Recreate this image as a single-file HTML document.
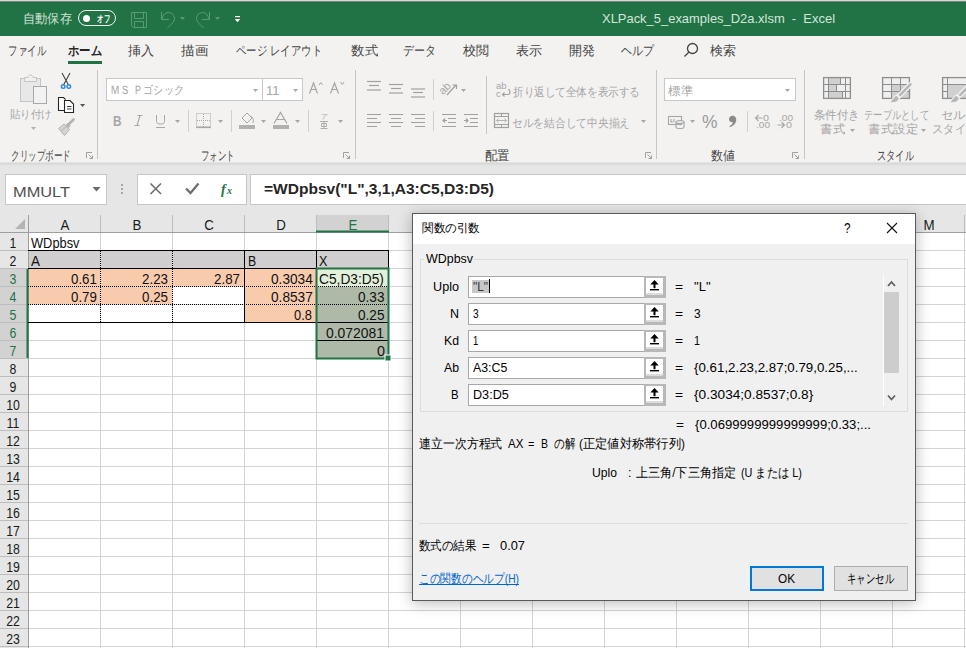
<!DOCTYPE html>
<html><head><meta charset="utf-8">
<style>
*{margin:0;padding:0;box-sizing:border-box}
html,body{width:966px;height:648px;overflow:hidden;background:#fff;font-family:"Liberation Sans",sans-serif;position:relative}
.a{position:absolute;white-space:nowrap}
svg{position:absolute;overflow:visible}

</style></head><body>
<div class="a" style="left:0px;top:0px;width:966px;height:1px;background:#d6d6d6"></div>
<div class="a" style="left:0px;top:1px;width:966px;height:1px;background:#7d8a80"></div>
<div class="a" style="left:0px;top:2px;width:966px;height:34px;background:#217346"></div>
<div class="a" style="left:0px;top:2px;width:966px;height:1px;background:#1b6e40"></div>
<div class="a" style="left:0px;top:36px;width:966px;height:127px;background:#f3f2f1"></div>
<div class="a" style="left:0px;top:163px;width:966px;height:52px;background:#e6e6e6"></div>
<div class="a" style="left:0px;top:162px;width:966px;height:4px;background:linear-gradient(#e9e8e7,#d8d8d8 40%,#e6e6e6)"></div>
<div class="a" style="left:23px;top:12.92px;font-size:12.5px;line-height:12.5px;color:#cfe2d5;font-weight:normal;transform:scaleX(0.9423);transform-origin:0 0;">自動保存</div>
<div class="a" style="left:78px;top:10px;width:38px;height:16px;border:1.5px solid #f2f7f3;border-radius:8px"></div>
<div class="a" style="left:82.5px;top:14.5px;width:7px;height:7px;border-radius:50%;background:#fff"></div>
<div class="a" style="left:97px;top:14.04px;font-size:10px;line-height:10px;color:#fff;font-weight:bold;transform:scaleX(0.6500);transform-origin:0 0;">オフ</div>
<svg style="left:0;top:0" width="966" height="36"><g fill="none" stroke="#5c9a76" stroke-width="1">
<path d="M131.5 12.5 H146.5 V27.5 H133.5 L131.5 25.5 Z"/>
<path d="M134.5 12.5 V18.5 H143.5 V12.5"/>
<path d="M134.5 27.5 V21.5 H143.5 V27.5"/>
<path d="M161.5 12 V19.5 H169"/>
<path d="M162.5 18.5 A6 6 0 0 1 174.5 18.5 A6 6 0 0 1 172.74 22.74 L167.5 28"/>
<path d="M209.5 12 V19.5 H202"/>
<path d="M208.5 18.5 A6 6 0 0 0 196.5 18.5 A6 6 0 0 0 198.26 22.74 L203.5 28"/>
</g>
<g fill="#5c9a76"><path d="M180 17 H185 L182.5 20 Z"/><path d="M215 17 H220 L217.5 20 Z"/></g>
<g fill="#fff"><rect x="235" y="16" width="5" height="1.2"/><path d="M234.8 19 H240.2 L237.5 22.2 Z"/></g>
</svg>
<div class="a" style="left:602px;top:11.80px;font-size:13px;line-height:13px;color:#d3e6d9;font-weight:normal;transform:scaleX(0.9953);transform-origin:0 0;">XLPack_5_examples_D2a.xlsm&nbsp; - &nbsp;Excel</div>
<div class="a" style="left:8px;top:45.42px;font-size:12.5px;line-height:12.5px;color:#444444;font-weight:normal;transform:scaleX(0.7308);transform-origin:0 0;">ファイル</div>
<div class="a" style="left:128px;top:45.42px;font-size:12.5px;line-height:12.5px;color:#444444;font-weight:normal;transform:scaleX(1.0000);transform-origin:0 0;">挿入</div>
<div class="a" style="left:181px;top:45.42px;font-size:12.5px;line-height:12.5px;color:#444444;font-weight:normal;transform:scaleX(1.0385);transform-origin:0 0;">描画</div>
<div class="a" style="left:236px;top:45.42px;font-size:12.5px;line-height:12.5px;color:#444444;font-weight:normal;transform:scaleX(0.8001);transform-origin:0 0;">ページ レイアウト</div>
<div class="a" style="left:351px;top:45.42px;font-size:12.5px;line-height:12.5px;color:#444444;font-weight:normal;transform:scaleX(1.0385);transform-origin:0 0;">数式</div>
<div class="a" style="left:403px;top:45.42px;font-size:12.5px;line-height:12.5px;color:#444444;font-weight:normal;transform:scaleX(0.8462);transform-origin:0 0;">データ</div>
<div class="a" style="left:463px;top:45.42px;font-size:12.5px;line-height:12.5px;color:#444444;font-weight:normal;transform:scaleX(1.0000);transform-origin:0 0;">校閲</div>
<div class="a" style="left:516px;top:45.42px;font-size:12.5px;line-height:12.5px;color:#444444;font-weight:normal;transform:scaleX(1.0000);transform-origin:0 0;">表示</div>
<div class="a" style="left:569px;top:45.42px;font-size:12.5px;line-height:12.5px;color:#444444;font-weight:normal;transform:scaleX(1.0000);transform-origin:0 0;">開発</div>
<div class="a" style="left:621px;top:45.42px;font-size:12.5px;line-height:12.5px;color:#444444;font-weight:normal;transform:scaleX(0.8462);transform-origin:0 0;">ヘルプ</div>
<div class="a" style="left:710px;top:45.42px;font-size:12.5px;line-height:12.5px;color:#444444;font-weight:normal;transform:scaleX(1.0000);transform-origin:0 0;">検索</div>
<div class="a" style="left:68px;top:45.42px;font-size:12.5px;line-height:12.5px;color:#262626;font-weight:bold;transform:scaleX(0.8718);transform-origin:0 0;">ホーム</div>
<div class="a" style="left:68px;top:61px;width:34px;height:3px;background:#217346"></div>
<svg style="left:0;top:0" width="966" height="70"><g fill="none" stroke="#444" stroke-width="1.3">
<circle cx="692.5" cy="48.5" r="5"/><path d="M689 52 L684.5 56.5"/></g></svg>
<div class="a" style="left:97px;top:70px;width:1px;height:89px;background:#c8c6c4"></div>
<div class="a" style="left:355px;top:70px;width:1px;height:89px;background:#c8c6c4"></div>
<div class="a" style="left:656px;top:70px;width:1px;height:89px;background:#c8c6c4"></div>
<div class="a" style="left:804px;top:70px;width:1px;height:89px;background:#c8c6c4"></div>
<div class="a" style="left:11px;top:148.50px;font-size:13px;line-height:13px;color:#444;font-weight:normal;transform:scaleX(0.6593);transform-origin:0 0;">クリップボード</div>
<div class="a" style="left:201px;top:148.50px;font-size:13px;line-height:13px;color:#444;font-weight:normal;transform:scaleX(0.6538);transform-origin:0 0;">フォント</div>
<div class="a" style="left:485px;top:148.50px;font-size:13px;line-height:13px;color:#444;font-weight:normal;transform:scaleX(0.9615);transform-origin:0 0;">配置</div>
<div class="a" style="left:711px;top:148.50px;font-size:13px;line-height:13px;color:#444;font-weight:normal;transform:scaleX(0.9231);transform-origin:0 0;">数値</div>
<div class="a" style="left:877px;top:148.50px;font-size:13px;line-height:13px;color:#444;font-weight:normal;transform:scaleX(0.7115);transform-origin:0 0;">スタイル</div>
<svg style="left:0;top:0" width="966" height="170"><g fill="none" stroke="#a0a0a0" stroke-width="1"><path d="M86.5 158 V152.5 H92" /><path d="M88.5 154.5 L92.5 158.5 M92.5 155.5 V158.5 H89.5"/><path d="M343.5 158 V152.5 H349" /><path d="M345.5 154.5 L349.5 158.5 M349.5 155.5 V158.5 H346.5"/><path d="M645.5 158 V152.5 H651" /><path d="M647.5 154.5 L651.5 158.5 M651.5 155.5 V158.5 H648.5"/><path d="M792.5 158 V152.5 H798" /><path d="M794.5 154.5 L798.5 158.5 M798.5 155.5 V158.5 H795.5"/></g></svg>
<svg style="left:0;top:0" width="966" height="170">
<rect x="20.5" y="78.5" width="20" height="23" fill="#e8e8e8" stroke="#c4c4c4"/>
<path d="M24.5 81.5 V77.5 H28 C28.5 74 32.5 74 33 77.5 H36.5 V81.5 Z" fill="#f0f0f0" stroke="#c4c4c4"/>
<rect x="33.5" y="86.5" width="13" height="17" fill="#f2f2f2" stroke="#a8a8a8"/>
<path d="M31 127 H36 L33.5 130 Z" fill="#b0b0b0"/>
<g stroke="#444" stroke-width="1.1" fill="none"><path d="M62 73 L68.5 85 M70 73 L63.5 85"/></g>
<g stroke="#2b88d8" stroke-width="1.4" fill="none"><circle cx="63.2" cy="86.6" r="1.8"/><circle cx="68.8" cy="86.6" r="1.8"/></g>
<g stroke="#262626" stroke-width="1.1" fill="#fff">
<path d="M64 110.5 H58.5 V97.5 H63.5 L65.5 99.5"/>
<path d="M64.5 112.5 V100.5 H70 L73.5 104 V112.5 Z"/>
<path d="M67 106.5 H71.5 M67 109 H71.5" stroke-width="0.9"/></g>
<path d="M80 104 H85.2 L82.6 107 Z" fill="#555"/>
<path d="M58.5 128.5 L64 124 L69.5 129.5 L64.5 135.5 Z" fill="#d4d4d4" stroke="#b4b4b4" stroke-width="1"/>
<path d="M61 131 L66.5 126.5" stroke="#b4b4b4" stroke-width="1"/>
<path d="M65.5 125 L67.5 123 L70.5 126 L68.5 128 Z" fill="#b4b4b4"/>
<path d="M68.5 124.5 L73.5 119.5" stroke="#b4b4b4" stroke-width="2.6" stroke-linecap="round"/>
</svg>
<div class="a" style="left:10px;top:109.19px;font-size:11px;line-height:11px;color:#a6a6a6;font-weight:normal;transform:scaleX(0.9545);transform-origin:0 0;">貼り付け</div>
<div class="a" style="left:106px;top:78px;width:157px;height:23px;background:#fff;border:1px solid #c8c8c8"></div>
<div class="a" style="left:262px;top:78px;width:41px;height:23px;background:#fff;border:1px solid #c8c8c8"></div>
<div class="a" style="left:110px;top:84.34px;font-size:12px;line-height:12px;color:#a6a6a6;font-weight:normal;transform:scaleX(0.8472);transform-origin:0 0;">ＭＳ Ｐゴシック</div>
<div class="a" style="left:266px;top:83.50px;font-size:13px;line-height:13px;color:#a6a6a6;font-weight:normal;">11</div>
<svg style="left:0;top:0" width="966" height="170"><g fill="#a6a6a6">
<path d="M253 89 H258 L255.5 92 Z"/><path d="M293 89 H298 L295.5 92 Z"/>
<path d="M175 120 H180 L177.5 123 Z"/><path d="M218 120 H223 L220.5 123 Z"/>
<path d="M261 120 H266 L263.5 123 Z"/><path d="M295 120 H300 L297.5 123 Z"/>
<path d="M338 120 H343 L340.5 123 Z"/>
<path d="M461 89 H466 L463.5 92 Z"/><path d="M641 120 H646 L643.5 123 Z"/>
<path d="M690 120 H695 L692.5 123 Z"/>
<rect x="239" y="125" width="16" height="4" fill="#b0b0b0"/>
<rect x="273" y="125" width="16" height="4" fill="#b0b0b0"/>
</g>
<g fill="none" stroke="#a6a6a6" stroke-width="1">
<path d="M156.5 115 V121.5 C156.5 125 164.5 125 164.5 121.5 V115"/><path d="M156 127.5 H165"/>
<rect x="196.5" y="113.5" width="14" height="13" stroke-dasharray="1 1"/>
<path d="M196 127.5 H211" stroke-width="1.2"/>
<path d="M203.5 114 V127 M197 120.5 H210" stroke-dasharray="1 1"/>
<path d="M242 118 L247 113 L252 118 L247 123 Z"/><path d="M250 116 C253 117 254 120 253 123"/>
<path d="M274 123.5 L280.5 112.5 L287 123.5 M276.5 119.5 H284.5" stroke-width="1.2"/>
<path d="M309.5 93.5 L313.5 83 L317.5 93.5 M311 89.5 H316" stroke-width="1.2"/>
<path d="M319 85 L320.8 82.5 L322.6 85"/>
<path d="M330.5 93.5 L334.5 83 L338.5 93.5 M332 89.5 H337" stroke-width="1.2"/>
<path d="M340.5 82 L342.3 84.5 L344.1 82"/>
</g></svg>
<div class="a" style="left:112.5px;top:113.10px;font-size:15px;line-height:15px;color:#a6a6a6;font-weight:bold;transform:scaleX(0.7839);transform-origin:0 0;">B</div>
<svg style="left:0;top:0" width="966" height="170"><path d="M137.5 115.5 H142.5 M134.5 125.5 H139.5 M140 115.5 L137 125.5" stroke="#a6a6a6" stroke-width="1.1" fill="none"/></svg>
<div class="a" style="left:320.5px;top:112.57px;font-size:7px;line-height:7px;color:#a6a6a6;font-weight:normal;transform:scaleX(1.0000);transform-origin:0 0;">ア</div>
<div class="a" style="left:188px;top:110px;width:1px;height:22px;background:#d2d0ce"></div>
<div class="a" style="left:231px;top:110px;width:1px;height:22px;background:#d2d0ce"></div>
<div class="a" style="left:308px;top:110px;width:1px;height:22px;background:#d2d0ce"></div>
<svg style="left:0;top:0" width="966" height="170"><g fill="none" stroke="#a6a6a6" stroke-width="1">
<path d="M320 121.5 H328 M320.5 128.5 H327.5 M321.5 123.5 H326.5 V126.5 H321.5 Z M324 121.5 V128.5" stroke-width="0.9"/>
</g></svg>
<svg style="left:0;top:0" width="966" height="170"><g fill="none" stroke="#a0a0a0" stroke-width="1.2"><path d="M367 81.5 H381"/><path d="M367 85.5 H367"/><path d="M367 90.0 H381"/><path d="M369 85.5 H379"/><path d="M389 84.5 H403"/><path d="M389 89.0 H389"/><path d="M389 93.0 H403"/><path d="M391 88.5 H401"/><path d="M411 89.0 H425"/><path d="M411 93.0 H411"/><path d="M411 97.0 H425"/><path d="M413 92.5 H423"/><path d="M367 114.5 H381 M367 118.5 H377 M367 122.5 H381 M367 126.5 H377"/><path d="M389 114.5 H403 M391 118.5 H401 M389 122.5 H403 M391 126.5 H401"/><path d="M411 114.5 H425 M415 118.5 H425 M411 122.5 H425 M415 126.5 H425"/><path d="M442 114.5 H456 M448 118.5 H456 M448 122.5 H456 M442 126.5 H456 M447 120.5 H443 M445 118.5 L443 120.5 L445 122.5"/><path d="M464 114.5 H478 M470 118.5 H478 M470 122.5 H478 M464 126.5 H478 M464 120.5 H468 M466 118.5 L468 120.5 L466 122.5"/><path d="M447 95 L456 85 M452.5 85 H456.5 V89"/><rect x="494.5" y="113.5" width="14" height="14"/><path d="M495 116.5 H508 M495 124.5 H508 M501.5 113.5 V116.5 M501.5 124.5 V127.5" stroke-width="1"/><path d="M496.5 120.5 H506.5 M498.5 118.5 L496.5 120.5 L498.5 122.5 M504.5 118.5 L506.5 120.5 L504.5 122.5" stroke="#b4b4b4" stroke-width="1"/><path d="M503 94.5 H508 C510.5 94.5 510.5 89.5 508 89.5 M504.5 92.5 L502.5 94.5 L504.5 96.5"/></g></svg>
<div class="a" style="left:433px;top:79px;width:1px;height:21px;background:#d2d0ce"></div>
<div class="a" style="left:433px;top:111px;width:1px;height:20px;background:#d2d0ce"></div>
<div class="a" style="left:486px;top:76px;width:1px;height:58px;background:#c8c6c4"></div>
<div class="a" style="left:438.5px;top:82.69px;font-size:11px;line-height:11px;color:#a6a6a6;font-weight:normal;transform:rotate(-45deg);transform-origin:6px 6px">ab</div>
<div class="a" style="left:496px;top:80.96px;font-size:9.5px;line-height:9.5px;color:#a6a6a6;font-weight:normal;">ab</div>
<div class="a" style="left:496px;top:88.96px;font-size:9.5px;line-height:9.5px;color:#a6a6a6;font-weight:normal;">c</div>
<div class="a" style="left:513px;top:86.77px;font-size:11.5px;line-height:11.5px;color:#a6a6a6;font-weight:normal;transform:scaleX(0.8819);transform-origin:0 0;">折り返して全体を表示する</div>
<div class="a" style="left:512px;top:118.27px;font-size:11.5px;line-height:11.5px;color:#a6a6a6;font-weight:normal;transform:scaleX(0.8939);transform-origin:0 0;">セルを結合して中央揃え</div>
<div class="a" style="left:664px;top:78px;width:132px;height:23px;background:#fff;border:1px solid #c8c8c8"></div>
<div class="a" style="left:668px;top:84.84px;font-size:12px;line-height:12px;color:#a6a6a6;font-weight:normal;transform:scaleX(1.0417);transform-origin:0 0;">標準</div>
<svg style="left:0;top:0" width="966" height="170"><path d="M785 89 H790 L787.5 92 Z" fill="#a6a6a6"/></svg>
<div class="a" style="left:702px;top:112.56px;font-size:18px;line-height:18px;color:#9a9a9a;font-weight:normal;transform:scaleX(0.9678);transform-origin:0 0;">%</div>
<svg style="left:0;top:0" width="966" height="170"><path d="M732.5 115.8 C735.5 115.8 736.6 118.5 736.2 120.8 C735.8 123.5 733.5 126 730 127.2 L729.4 126.2 C731.5 125.2 732.6 123.8 732.9 122.3 C730.5 122.5 729 121 729 119.2 C729 117.2 730.6 115.8 732.5 115.8 Z" fill="#8a8a8a"/></svg>
<div class="a" style="left:747px;top:111px;width:1px;height:21px;background:#d2d0ce"></div>
<svg style="left:0;top:0" width="966" height="170"><g fill="none" stroke="#a6a6a6" stroke-width="1.1">
<rect x="668.5" y="116.5" width="13" height="8"/><path d="M671 119 V122 H673 M674 119 V122"/>
<ellipse cx="680" cy="122" rx="4" ry="1.5" fill="#e6e6e6"/><path d="M676 122 V127 C676 129 684 129 684 127 V122"/>
<path d="M755.5 118 H762.5 M758.5 115 L755.5 118 L758.5 121"/>
<path d="M777.5 125 H784.5 M781.5 122 L784.5 125 L781.5 128"/>
</g></svg>
<div class="a" style="left:763px;top:113.46px;font-size:9.5px;line-height:9.5px;color:#a6a6a6;font-weight:normal;transform:scaleX(1.1327);transform-origin:0 0;">0</div>
<div class="a" style="left:756px;top:120.46px;font-size:9.5px;line-height:9.5px;color:#a6a6a6;font-weight:normal;transform:scaleX(1.0591);transform-origin:0 0;">.00</div>
<div class="a" style="left:779px;top:113.46px;font-size:9.5px;line-height:9.5px;color:#a6a6a6;font-weight:normal;transform:scaleX(1.0591);transform-origin:0 0;">.00</div>
<div class="a" style="left:786px;top:120.46px;font-size:9.5px;line-height:9.5px;color:#a6a6a6;font-weight:normal;transform:scaleX(1.1327);transform-origin:0 0;">0</div>
<svg style="left:0;top:0" width="966" height="170">
<g fill="#efefef" stroke="none"><rect x="823" y="77" width="28" height="22"/><rect x="882" y="77" width="28" height="22"/><rect x="942" y="77" width="28" height="22"/></g>
<g fill="#d0d0d0" stroke="none">
<rect x="828.5" y="77.5" width="12" height="7"/><rect x="828.5" y="84.5" width="8" height="7"/><rect x="828.5" y="91.5" width="14" height="7"/>
<rect x="891.5" y="84.5" width="19" height="14"/>
<rect x="947.5" y="84.5" width="22" height="14"/>
</g>
<g fill="none" stroke="#8e8e8e" stroke-width="1.3">
<rect x="823.6" y="77.6" width="26.8" height="20.8"/>
<path d="M824 84.5 H850 M824 91.5 H850 M828.5 78 V98 M845.5 78 V98 M840.5 78 V84.5 M836.5 84.5 V91.5 M842.5 91.5 V98" stroke-width="1"/>
<rect x="882.6" y="77.6" width="26.8" height="20.8"/>
<path d="M883 84.5 H909 M883 91.5 H909 M891.5 78 V98 M900.5 78 V98" stroke-width="1"/>
<rect x="942.6" y="77.6" width="26.8" height="20.8"/>
<path d="M943 84.5 H966 M943 91.5 H947.5 M947.5 78 V98" stroke-width="1"/>
</g>
<g fill="#b8b8b8" stroke="#f3f2f1" stroke-width="1.2">
<path d="M910 82.5 C912 82.5 913 84 912 85.5 L900.5 97.5 L897.5 95 L908.5 83.5 C909 83 909.5 82.5 910 82.5 Z"/>
<path d="M896.5 95 L899.5 98 C899 101 896 103.5 888.5 102.5 C892.5 101 892.5 96.5 896.5 95 Z"/>
<path d="M970 82.5 C972 82.5 973 84 972 85.5 L960.5 97.5 L957.5 95 L968.5 83.5 C969 83 969.5 82.5 970 82.5 Z"/>
<path d="M956.5 95 L959.5 98 C959 101 956 103.5 948.5 102.5 C952.5 101 952.5 96.5 956.5 95 Z"/>
</g>
<g fill="#a6a6a6"><path d="M850 129 H855 L852.5 132 Z"/><path d="M921 129 H926 L923.5 132 Z"/></g>
</svg>
<div class="a" style="left:814px;top:109.77px;font-size:11.5px;line-height:11.5px;color:#a6a6a6;font-weight:normal;transform:scaleX(0.9583);transform-origin:0 0;">条件付き</div>
<div class="a" style="left:820px;top:124.27px;font-size:11.5px;line-height:11.5px;color:#a6a6a6;font-weight:normal;transform:scaleX(1.0417);transform-origin:0 0;">書式</div>
<div class="a" style="left:864px;top:109.77px;font-size:11.5px;line-height:11.5px;color:#a6a6a6;font-weight:normal;transform:scaleX(0.7738);transform-origin:0 0;">テーブルとして</div>
<div class="a" style="left:868px;top:124.27px;font-size:11.5px;line-height:11.5px;color:#a6a6a6;font-weight:normal;transform:scaleX(1.0417);transform-origin:0 0;">書式設定</div>
<div class="a" style="left:941px;top:109.77px;font-size:11.5px;line-height:11.5px;color:#a6a6a6;font-weight:normal;transform:scaleX(1.0278);transform-origin:0 0;">セルの</div>
<div class="a" style="left:932px;top:124.27px;font-size:11.5px;line-height:11.5px;color:#a6a6a6;font-weight:normal;transform:scaleX(0.9375);transform-origin:0 0;">スタイル</div>
<div class="a" style="left:5px;top:174px;width:102px;height:31px;background:#fff;border:1px solid #c6c6c6"></div>
<div class="a" style="left:12.5px;top:183.80px;font-size:15px;line-height:15px;color:#505050;font-weight:normal;transform:scaleX(1.0916);transform-origin:0 0;">MMULT</div>
<svg style="left:0;top:0" width="966" height="215">
<path d="M92.5 187 H100.5 L96.5 191.5 Z" fill="#6a6a6a"/>
<g fill="#a6a6a6"><rect x="121" y="184" width="2" height="2"/><rect x="121" y="188" width="2" height="2"/><rect x="121" y="192" width="2" height="2"/></g>
</svg>
<div class="a" style="left:137px;top:174px;width:110px;height:31px;background:#fff;border:1px solid #c6c6c6"></div>
<div class="a" style="left:250px;top:174px;width:716px;height:31px;background:#fff;border:1px solid #c6c6c6;border-right:none"></div>
<svg style="left:0;top:0" width="966" height="215">
<g fill="none" stroke="#6e6e6e" stroke-width="1.6"><path d="M150.5 183.5 L161 194 M161 183.5 L150.5 194"/>
<path d="M186 188.5 L190.5 193 L198.5 183.5" stroke-width="2.2"/></g>
</svg>
<div class="a" style="left:221px;top:182.65px;font-size:14px;line-height:14px;color:#217346;font-weight:bold;font-family:'Liberation Serif',serif"><i>f</i></div>
<div class="a" style="left:227px;top:186.03px;font-size:10px;line-height:10px;color:#217346;font-weight:bold;font-family:'Liberation Serif',serif"><i>x</i></div>
<div class="a" style="left:263.5px;top:181.18px;font-size:15.5px;line-height:15.5px;color:#262626;font-weight:bold;transform:scaleX(1.0018);transform-origin:0 0;">=WDpbsv(&quot;L&quot;,3,1,A3:C5,D3:D5)</div>
<div class="a" style="left:0px;top:215px;width:966px;height:17px;background:#e6e6e6"></div>
<div class="a" style="left:0px;top:233px;width:28px;height:415px;background:#e6e6e6"></div>
<div class="a" style="left:317px;top:215px;width:71px;height:16px;background:#d2d2d2"></div>
<div class="a" style="left:0px;top:269px;width:27px;height:89px;background:#d2d2d2"></div>
<svg style="left:0;top:0" width="966" height="648"><g stroke="#d4d4d4" stroke-width="1"><path d="M100.5 233 V648"/><path d="M172.5 233 V648"/><path d="M244.5 233 V648"/><path d="M316.5 233 V648"/><path d="M388.5 233 V648"/><path d="M460.5 233 V648"/><path d="M532.5 233 V648"/><path d="M604.5 233 V648"/><path d="M676.5 233 V648"/><path d="M748.5 233 V648"/><path d="M820.5 233 V648"/><path d="M892.5 233 V648"/><path d="M964.5 233 V648"/><path d="M29 250.5 H966"/><path d="M29 268.5 H966"/><path d="M29 286.5 H966"/><path d="M29 304.5 H966"/><path d="M29 322.5 H966"/><path d="M29 340.5 H966"/><path d="M29 358.5 H966"/><path d="M29 376.5 H966"/><path d="M29 394.5 H966"/><path d="M29 412.5 H966"/><path d="M29 430.5 H966"/><path d="M29 448.5 H966"/><path d="M29 466.5 H966"/><path d="M29 484.5 H966"/><path d="M29 502.5 H966"/><path d="M29 520.5 H966"/><path d="M29 538.5 H966"/><path d="M29 556.5 H966"/><path d="M29 574.5 H966"/><path d="M29 592.5 H966"/><path d="M29 610.5 H966"/><path d="M29 628.5 H966"/><path d="M29 646.5 H966"/></g><g stroke="#bdbdbd" stroke-width="1"><path d="M100.5 215 V232"/><path d="M172.5 215 V232"/><path d="M244.5 215 V232"/><path d="M316.5 215 V232"/><path d="M388.5 215 V232"/><path d="M460.5 215 V232"/><path d="M532.5 215 V232"/><path d="M604.5 215 V232"/><path d="M676.5 215 V232"/><path d="M748.5 215 V232"/><path d="M820.5 215 V232"/><path d="M892.5 215 V232"/><path d="M964.5 215 V232"/><path d="M0 250.5 H28"/><path d="M0 268.5 H28"/><path d="M0 286.5 H28"/><path d="M0 304.5 H28"/><path d="M0 322.5 H28"/><path d="M0 340.5 H28"/><path d="M0 358.5 H28"/><path d="M0 376.5 H28"/><path d="M0 394.5 H28"/><path d="M0 412.5 H28"/><path d="M0 430.5 H28"/><path d="M0 448.5 H28"/><path d="M0 466.5 H28"/><path d="M0 484.5 H28"/><path d="M0 502.5 H28"/><path d="M0 520.5 H28"/><path d="M0 538.5 H28"/><path d="M0 556.5 H28"/><path d="M0 574.5 H28"/><path d="M0 592.5 H28"/><path d="M0 610.5 H28"/><path d="M0 628.5 H28"/><path d="M0 646.5 H28"/></g><path d="M0 232.5 H966" stroke="#9e9e9e"/><path d="M28.5 215 V648" stroke="#9e9e9e"/><path d="M316 231.5 H389" stroke="#217346" stroke-width="2"/><path d="M27.5 269 V358" stroke="#217346" stroke-width="2"/><path d="M15 229 L25 219 V229 Z" fill="#b4b4b4"/></svg>
<div class="a" style="left:34.599999999999994px;top:218.15px;width:60px;text-align:center;font-size:14px;line-height:14px;color:#1a1a1a;transform:scaleX(0.95);transform-origin:30px 0">A</div>
<div class="a" style="left:106.6px;top:218.15px;width:60px;text-align:center;font-size:14px;line-height:14px;color:#1a1a1a;transform:scaleX(0.95);transform-origin:30px 0">B</div>
<div class="a" style="left:178.6px;top:218.15px;width:60px;text-align:center;font-size:14px;line-height:14px;color:#1a1a1a;transform:scaleX(0.95);transform-origin:30px 0">C</div>
<div class="a" style="left:250.60000000000002px;top:218.15px;width:60px;text-align:center;font-size:14px;line-height:14px;color:#1a1a1a;transform:scaleX(0.95);transform-origin:30px 0">D</div>
<div class="a" style="left:322.6px;top:218.15px;width:60px;text-align:center;font-size:14px;line-height:14px;color:#217346;transform:scaleX(0.95);transform-origin:30px 0">E</div>
<div class="a" style="left:394.6px;top:218.15px;width:60px;text-align:center;font-size:14px;line-height:14px;color:#1a1a1a;transform:scaleX(0.95);transform-origin:30px 0">F</div>
<div class="a" style="left:466.6px;top:218.15px;width:60px;text-align:center;font-size:14px;line-height:14px;color:#1a1a1a;transform:scaleX(0.95);transform-origin:30px 0">G</div>
<div class="a" style="left:538.6px;top:218.15px;width:60px;text-align:center;font-size:14px;line-height:14px;color:#1a1a1a;transform:scaleX(0.95);transform-origin:30px 0">H</div>
<div class="a" style="left:610.6px;top:218.15px;width:60px;text-align:center;font-size:14px;line-height:14px;color:#1a1a1a;transform:scaleX(0.95);transform-origin:30px 0">I</div>
<div class="a" style="left:682.6px;top:218.15px;width:60px;text-align:center;font-size:14px;line-height:14px;color:#1a1a1a;transform:scaleX(0.95);transform-origin:30px 0">J</div>
<div class="a" style="left:754.6px;top:218.15px;width:60px;text-align:center;font-size:14px;line-height:14px;color:#1a1a1a;transform:scaleX(0.95);transform-origin:30px 0">K</div>
<div class="a" style="left:826.6px;top:218.15px;width:60px;text-align:center;font-size:14px;line-height:14px;color:#1a1a1a;transform:scaleX(0.95);transform-origin:30px 0">L</div>
<div class="a" style="left:898.6px;top:218.15px;width:60px;text-align:center;font-size:14px;line-height:14px;color:#1a1a1a;transform:scaleX(0.95);transform-origin:30px 0">M</div>
<div class="a" style="left:-17.4px;top:236.15px;width:60px;text-align:center;font-size:14px;line-height:14px;color:#1a1a1a;transform:scaleX(0.88);transform-origin:30px 0">1</div>
<div class="a" style="left:-17.4px;top:254.15px;width:60px;text-align:center;font-size:14px;line-height:14px;color:#1a1a1a;transform:scaleX(0.88);transform-origin:30px 0">2</div>
<div class="a" style="left:-17.4px;top:272.15px;width:60px;text-align:center;font-size:14px;line-height:14px;color:#217346;transform:scaleX(0.88);transform-origin:30px 0">3</div>
<div class="a" style="left:-17.4px;top:290.15px;width:60px;text-align:center;font-size:14px;line-height:14px;color:#217346;transform:scaleX(0.88);transform-origin:30px 0">4</div>
<div class="a" style="left:-17.4px;top:308.15px;width:60px;text-align:center;font-size:14px;line-height:14px;color:#217346;transform:scaleX(0.88);transform-origin:30px 0">5</div>
<div class="a" style="left:-17.4px;top:326.15px;width:60px;text-align:center;font-size:14px;line-height:14px;color:#217346;transform:scaleX(0.88);transform-origin:30px 0">6</div>
<div class="a" style="left:-17.4px;top:344.15px;width:60px;text-align:center;font-size:14px;line-height:14px;color:#217346;transform:scaleX(0.88);transform-origin:30px 0">7</div>
<div class="a" style="left:-17.4px;top:362.15px;width:60px;text-align:center;font-size:14px;line-height:14px;color:#1a1a1a;transform:scaleX(0.88);transform-origin:30px 0">8</div>
<div class="a" style="left:-17.4px;top:380.15px;width:60px;text-align:center;font-size:14px;line-height:14px;color:#1a1a1a;transform:scaleX(0.88);transform-origin:30px 0">9</div>
<div class="a" style="left:-17.4px;top:398.15px;width:60px;text-align:center;font-size:14px;line-height:14px;color:#1a1a1a;transform:scaleX(0.88);transform-origin:30px 0">10</div>
<div class="a" style="left:-17.4px;top:416.15px;width:60px;text-align:center;font-size:14px;line-height:14px;color:#1a1a1a;transform:scaleX(0.88);transform-origin:30px 0">11</div>
<div class="a" style="left:-17.4px;top:434.15px;width:60px;text-align:center;font-size:14px;line-height:14px;color:#1a1a1a;transform:scaleX(0.88);transform-origin:30px 0">12</div>
<div class="a" style="left:-17.4px;top:452.15px;width:60px;text-align:center;font-size:14px;line-height:14px;color:#1a1a1a;transform:scaleX(0.88);transform-origin:30px 0">13</div>
<div class="a" style="left:-17.4px;top:470.15px;width:60px;text-align:center;font-size:14px;line-height:14px;color:#1a1a1a;transform:scaleX(0.88);transform-origin:30px 0">14</div>
<div class="a" style="left:-17.4px;top:488.15px;width:60px;text-align:center;font-size:14px;line-height:14px;color:#1a1a1a;transform:scaleX(0.88);transform-origin:30px 0">15</div>
<div class="a" style="left:-17.4px;top:506.15px;width:60px;text-align:center;font-size:14px;line-height:14px;color:#1a1a1a;transform:scaleX(0.88);transform-origin:30px 0">16</div>
<div class="a" style="left:-17.4px;top:524.15px;width:60px;text-align:center;font-size:14px;line-height:14px;color:#1a1a1a;transform:scaleX(0.88);transform-origin:30px 0">17</div>
<div class="a" style="left:-17.4px;top:542.15px;width:60px;text-align:center;font-size:14px;line-height:14px;color:#1a1a1a;transform:scaleX(0.88);transform-origin:30px 0">18</div>
<div class="a" style="left:-17.4px;top:560.15px;width:60px;text-align:center;font-size:14px;line-height:14px;color:#1a1a1a;transform:scaleX(0.88);transform-origin:30px 0">19</div>
<div class="a" style="left:-17.4px;top:578.15px;width:60px;text-align:center;font-size:14px;line-height:14px;color:#1a1a1a;transform:scaleX(0.88);transform-origin:30px 0">20</div>
<div class="a" style="left:-17.4px;top:596.15px;width:60px;text-align:center;font-size:14px;line-height:14px;color:#1a1a1a;transform:scaleX(0.88);transform-origin:30px 0">21</div>
<div class="a" style="left:-17.4px;top:614.15px;width:60px;text-align:center;font-size:14px;line-height:14px;color:#1a1a1a;transform:scaleX(0.88);transform-origin:30px 0">22</div>
<div class="a" style="left:-17.4px;top:632.15px;width:60px;text-align:center;font-size:14px;line-height:14px;color:#1a1a1a;transform:scaleX(0.88);transform-origin:30px 0">23</div>
<div class="a" style="left:29px;top:251px;width:359px;height:17px;background:#d0cece"></div>
<div class="a" style="left:29px;top:269px;width:71px;height:17px;background:#f8cbad"></div>
<div class="a" style="left:101px;top:269px;width:71px;height:17px;background:#f8cbad"></div>
<div class="a" style="left:173px;top:269px;width:71px;height:17px;background:#f8cbad"></div>
<div class="a" style="left:29px;top:287px;width:71px;height:17px;background:#f8cbad"></div>
<div class="a" style="left:101px;top:287px;width:71px;height:17px;background:#f8cbad"></div>
<div class="a" style="left:245px;top:269px;width:71px;height:53px;background:#f8cbad"></div>
<div class="a" style="left:317px;top:269px;width:71px;height:17px;background:#e2efda"></div>
<div class="a" style="left:317px;top:287px;width:71px;height:71px;background:#aeb9a8"></div>
<svg style="left:0;top:0" width="966" height="648"><g stroke="#000" stroke-width="1" fill="none"><path d="M28 250.5 H389 M28 268.5 H389 M28 322.5 H317 M316 340.5 H389 M316 322.5 H389 M316 358.5 H389"/><path d="M244.5 250 V323 M316.5 250 V359 M388.5 250 V359"/></g><g stroke="#000" stroke-width="1" stroke-dasharray="1 1" fill="none"><path d="M28 286.5 H389 M28 304.5 H389"/><path d="M100.5 251 V322 M172.5 251 V322"/></g><rect x="316.5" y="268.5" width="72" height="90" stroke="#217346" stroke-width="2" fill="none"/><rect x="385" y="355" width="6" height="6" fill="#217346" stroke="#fff" stroke-width="1"/></svg>
<div class="a" style="left:31px;top:236.15px;font-size:14px;line-height:14px;color:#111;font-weight:normal;transform:scaleX(0.9167);transform-origin:0 0;">WDpbsv</div>
<div class="a" style="left:31px;top:254.15px;font-size:14px;line-height:14px;color:#111;font-weight:normal;transform:scaleX(0.9632);transform-origin:0 0;">A</div>
<div class="a" style="left:248px;top:254.15px;font-size:14px;line-height:14px;color:#111;font-weight:normal;transform:scaleX(0.8776);transform-origin:0 0;">B</div>
<div class="a" style="left:319px;top:254.15px;font-size:14px;line-height:14px;color:#111;font-weight:normal;transform:scaleX(0.8990);transform-origin:0 0;">X</div>
<div class="a" style="left:70.5px;top:272.15px;font-size:14px;line-height:14px;color:#111;font-weight:normal;transform:scaleX(0.9505);transform-origin:0 0;">0.61</div>
<div class="a" style="left:142.4px;top:272.15px;font-size:14px;line-height:14px;color:#111;font-weight:normal;transform:scaleX(0.9541);transform-origin:0 0;">2.23</div>
<div class="a" style="left:214.2px;top:272.15px;font-size:14px;line-height:14px;color:#111;font-weight:normal;transform:scaleX(0.9541);transform-origin:0 0;">2.87</div>
<div class="a" style="left:70.5px;top:290.15px;font-size:14px;line-height:14px;color:#111;font-weight:normal;transform:scaleX(0.9505);transform-origin:0 0;">0.79</div>
<div class="a" style="left:142.4px;top:290.15px;font-size:14px;line-height:14px;color:#111;font-weight:normal;transform:scaleX(0.9541);transform-origin:0 0;">0.25</div>
<div class="a" style="left:270.5px;top:272.15px;font-size:14px;line-height:14px;color:#111;font-weight:normal;transform:scaleX(0.9760);transform-origin:0 0;">0.3034</div>
<div class="a" style="left:270.5px;top:290.15px;font-size:14px;line-height:14px;color:#111;font-weight:normal;transform:scaleX(0.9760);transform-origin:0 0;">0.8537</div>
<div class="a" style="left:294.4px;top:308.15px;font-size:14px;line-height:14px;color:#111;font-weight:normal;transform:scaleX(0.9194);transform-origin:0 0;">0.8</div>
<div class="a" style="left:318.5px;top:272.15px;font-size:14px;line-height:14px;color:#111;font-weight:normal;transform:scaleX(0.9812);transform-origin:0 0;">C5,D3:D5)</div>
<div class="a" style="left:358.3px;top:290.15px;font-size:14px;line-height:14px;color:#111;font-weight:normal;transform:scaleX(0.9725);transform-origin:0 0;">0.33</div>
<div class="a" style="left:358.3px;top:308.15px;font-size:14px;line-height:14px;color:#111;font-weight:normal;transform:scaleX(0.9725);transform-origin:0 0;">0.25</div>
<div class="a" style="left:326.4px;top:326.15px;font-size:14px;line-height:14px;color:#111;font-weight:normal;transform:scaleX(0.9930);transform-origin:0 0;">0.072081</div>
<div class="a" style="left:377.2px;top:344.15px;font-size:14px;line-height:14px;color:#111;font-weight:normal;transform:scaleX(1.0261);transform-origin:0 0;">0</div>
<div class="a" style="left:412px;top:213px;width:504px;height:388px;background:#f0f0f0;border:1px solid #5a5a5a;box-shadow:0 2px 14px rgba(0,0,0,0.28)"></div>
<div class="a" style="left:413px;top:214px;width:502px;height:30px;background:#fff"></div>
<div class="a" style="left:422px;top:222.34px;font-size:12px;line-height:12px;color:#000;font-weight:normal;transform:scaleX(0.9667);transform-origin:0 0;">関数の引数</div>
<div class="a" style="left:844px;top:221.35px;font-size:14px;line-height:14px;color:#000;font-weight:normal;transform:scaleX(0.8337);transform-origin:0 0;">?</div>
<svg style="left:0;top:0" width="966" height="648"><path d="M887 223 L897 233 M897 223 L887 233" stroke="#111" stroke-width="1.1" fill="none"/></svg>
<div class="a" style="left:420px;top:259px;width:488px;height:153px;border:1px solid #dcdcdc"></div>
<div class="a" style="left:424px;top:252px;width:50px;height:12px;background:#f0f0f0"></div>
<div class="a" style="left:425.5px;top:252.92px;font-size:12.5px;line-height:12.5px;color:#000;font-weight:normal;transform:scaleX(0.9950);transform-origin:0 0;">WDpbsv</div>
<div class="a" style="left:433.2px;top:280.92px;font-size:12.5px;line-height:12.5px;color:#000;font-weight:normal;transform:scaleX(1.0109);transform-origin:0 0;">Uplo</div>
<div class="a" style="left:468px;top:276px;width:198px;height:22px;background:#fff;border:1px solid #a8a8a8"></div>
<div class="a" style="left:644px;top:276px;width:22px;height:22px;background:#b8b8b8"></div>
<div class="a" style="left:646px;top:278px;width:17px;height:17px;background:#dcdcdc"></div>
<div class="a" style="left:646px;top:278px;width:17px;height:15px;background:#fff"></div>
<svg style="left:0;top:0" width="966" height="648"><path d="M650.3 284.6 L654.5 280 L658.7 284.6 Z" fill="#000"/><rect x="653.5" y="284" width="2" height="4.2" fill="#000"/><rect x="650" y="289" width="9" height="1.4" fill="#000"/></svg>
<div class="a" style="left:675.4px;top:280.92px;font-size:12.5px;line-height:12.5px;color:#000;font-weight:normal;transform:scaleX(1.1077);transform-origin:0 0;">=</div>
<div class="a" style="left:694.3px;top:280.92px;font-size:12.5px;line-height:12.5px;color:#000;font-weight:normal;transform:scaleX(1.0488);transform-origin:0 0;">&quot;L&quot;</div>
<div class="a" style="left:450px;top:307.92px;font-size:12.5px;line-height:12.5px;color:#000;font-weight:normal;transform:scaleX(0.9965);transform-origin:0 0;">N</div>
<div class="a" style="left:468px;top:303px;width:198px;height:22px;background:#fff;border:1px solid #a8a8a8"></div>
<div class="a" style="left:644px;top:303px;width:22px;height:22px;background:#b8b8b8"></div>
<div class="a" style="left:646px;top:305px;width:17px;height:17px;background:#dcdcdc"></div>
<div class="a" style="left:646px;top:305px;width:17px;height:15px;background:#fff"></div>
<svg style="left:0;top:0" width="966" height="648"><path d="M650.3 311.6 L654.5 307 L658.7 311.6 Z" fill="#000"/><rect x="653.5" y="311" width="2" height="4.2" fill="#000"/><rect x="650" y="316" width="9" height="1.4" fill="#000"/></svg>
<div class="a" style="left:675.4px;top:307.92px;font-size:12.5px;line-height:12.5px;color:#000;font-weight:normal;transform:scaleX(1.1077);transform-origin:0 0;">=</div>
<div class="a" style="left:694.3px;top:307.92px;font-size:12.5px;line-height:12.5px;color:#000;font-weight:normal;transform:scaleX(0.9492);transform-origin:0 0;">3</div>
<div class="a" style="left:444px;top:334.92px;font-size:12.5px;line-height:12.5px;color:#000;font-weight:normal;transform:scaleX(0.9806);transform-origin:0 0;">Kd</div>
<div class="a" style="left:468px;top:330px;width:198px;height:22px;background:#fff;border:1px solid #a8a8a8"></div>
<div class="a" style="left:644px;top:330px;width:22px;height:22px;background:#b8b8b8"></div>
<div class="a" style="left:646px;top:332px;width:17px;height:17px;background:#dcdcdc"></div>
<div class="a" style="left:646px;top:332px;width:17px;height:15px;background:#fff"></div>
<svg style="left:0;top:0" width="966" height="648"><path d="M650.3 338.6 L654.5 334 L658.7 338.6 Z" fill="#000"/><rect x="653.5" y="338" width="2" height="4.2" fill="#000"/><rect x="650" y="343" width="9" height="1.4" fill="#000"/></svg>
<div class="a" style="left:675.4px;top:334.92px;font-size:12.5px;line-height:12.5px;color:#000;font-weight:normal;transform:scaleX(1.1077);transform-origin:0 0;">=</div>
<div class="a" style="left:694.3px;top:334.92px;font-size:12.5px;line-height:12.5px;color:#000;font-weight:normal;transform:scaleX(0.8629);transform-origin:0 0;">1</div>
<div class="a" style="left:444px;top:361.92px;font-size:12.5px;line-height:12.5px;color:#000;font-weight:normal;transform:scaleX(0.9806);transform-origin:0 0;">Ab</div>
<div class="a" style="left:468px;top:357px;width:198px;height:22px;background:#fff;border:1px solid #a8a8a8"></div>
<div class="a" style="left:644px;top:357px;width:22px;height:22px;background:#b8b8b8"></div>
<div class="a" style="left:646px;top:359px;width:17px;height:17px;background:#dcdcdc"></div>
<div class="a" style="left:646px;top:359px;width:17px;height:15px;background:#fff"></div>
<svg style="left:0;top:0" width="966" height="648"><path d="M650.3 365.6 L654.5 361 L658.7 365.6 Z" fill="#000"/><rect x="653.5" y="365" width="2" height="4.2" fill="#000"/><rect x="650" y="370" width="9" height="1.4" fill="#000"/></svg>
<div class="a" style="left:675.4px;top:361.92px;font-size:12.5px;line-height:12.5px;color:#000;font-weight:normal;transform:scaleX(1.1077);transform-origin:0 0;">=</div>
<div class="a" style="left:694.3px;top:361.92px;font-size:12.5px;line-height:12.5px;color:#000;font-weight:normal;transform:scaleX(1.0657);transform-origin:0 0;">{0.61,2.23,2.87;0.79,0.25,...</div>
<div class="a" style="left:451.4px;top:388.92px;font-size:12.5px;line-height:12.5px;color:#000;font-weight:normal;transform:scaleX(0.9109);transform-origin:0 0;">B</div>
<div class="a" style="left:468px;top:384px;width:198px;height:22px;background:#fff;border:1px solid #a8a8a8"></div>
<div class="a" style="left:644px;top:384px;width:22px;height:22px;background:#b8b8b8"></div>
<div class="a" style="left:646px;top:386px;width:17px;height:17px;background:#dcdcdc"></div>
<div class="a" style="left:646px;top:386px;width:17px;height:15px;background:#fff"></div>
<svg style="left:0;top:0" width="966" height="648"><path d="M650.3 392.6 L654.5 388 L658.7 392.6 Z" fill="#000"/><rect x="653.5" y="392" width="2" height="4.2" fill="#000"/><rect x="650" y="397" width="9" height="1.4" fill="#000"/></svg>
<div class="a" style="left:675.4px;top:388.92px;font-size:12.5px;line-height:12.5px;color:#000;font-weight:normal;transform:scaleX(1.1077);transform-origin:0 0;">=</div>
<div class="a" style="left:694.3px;top:388.92px;font-size:12.5px;line-height:12.5px;color:#000;font-weight:normal;transform:scaleX(1.0922);transform-origin:0 0;">{0.3034;0.8537;0.8}</div>
<div class="a" style="left:471.5px;top:279.5px;width:17.5px;height:13px;background:#c8c8c8"></div>
<div class="a" style="left:473px;top:280.92px;font-size:12.5px;line-height:12.5px;color:#333;font-weight:normal;transform:scaleX(0.9477);transform-origin:0 0;">&quot;L&quot;</div>
<div class="a" style="left:489px;top:279px;width:1px;height:14px;background:#000"></div>
<div class="a" style="left:472.6px;top:307.92px;font-size:12.5px;line-height:12.5px;color:#000;font-weight:normal;transform:scaleX(0.8054);transform-origin:0 0;">3</div>
<div class="a" style="left:472.6px;top:334.92px;font-size:12.5px;line-height:12.5px;color:#000;font-weight:normal;transform:scaleX(0.7479);transform-origin:0 0;">1</div>
<div class="a" style="left:472.6px;top:361.92px;font-size:12.5px;line-height:12.5px;color:#000;font-weight:normal;transform:scaleX(0.9871);transform-origin:0 0;">A3:C5</div>
<div class="a" style="left:472.6px;top:388.92px;font-size:12.5px;line-height:12.5px;color:#000;font-weight:normal;transform:scaleX(1.0102);transform-origin:0 0;">D3:D5</div>
<div class="a" style="left:883px;top:275px;width:1px;height:131px;background:#fff"></div>
<div class="a" style="left:884px;top:292px;width:15px;height:81px;background:#cdcdcd"></div>
<svg style="left:0;top:0" width="966" height="648"><g stroke="#606060" stroke-width="1.8" fill="none">
<path d="M888 286 L891.5 282 L895 286"/><path d="M888 395.5 L891.5 399.5 L895 395.5"/></g></svg>
<div class="a" style="left:676px;top:418.92px;font-size:12.5px;line-height:12.5px;color:#000;font-weight:normal;transform:scaleX(1.0940);transform-origin:0 0;">=</div>
<div class="a" style="left:694.5px;top:418.92px;font-size:12.5px;line-height:12.5px;color:#000;font-weight:normal;transform:scaleX(1.0506);transform-origin:0 0;">{0.0699999999999999;0.33;...</div>
<div class="a" style="left:419.2px;top:437.92px;font-size:12.5px;line-height:12.5px;color:#000;font-weight:normal;transform:scaleX(0.9154);transform-origin:0 0;">連立一次方程式</div>
<div class="a" style="left:507.6px;top:437.92px;font-size:12.5px;line-height:12.5px;color:#000;font-weight:normal;transform:scaleX(0.9228);transform-origin:0 0;">AX</div>
<div class="a" style="left:528.4px;top:437.92px;font-size:12.5px;line-height:12.5px;color:#000;font-weight:normal;transform:scaleX(0.8752);transform-origin:0 0;">=</div>
<div class="a" style="left:541.4px;top:437.92px;font-size:12.5px;line-height:12.5px;color:#000;font-weight:normal;transform:scaleX(0.8390);transform-origin:0 0;">B</div>
<div class="a" style="left:553.8px;top:437.92px;font-size:12.5px;line-height:12.5px;color:#000;font-weight:normal;transform:scaleX(0.8154);transform-origin:0 0;">の解</div>
<div class="a" style="left:578.7px;top:437.92px;font-size:12.5px;line-height:12.5px;color:#000;font-weight:normal;transform:scaleX(0.9419);transform-origin:0 0;">(正定値対称帯行列)</div>
<div class="a" style="left:591.6px;top:467.42px;font-size:12.5px;line-height:12.5px;color:#000;font-weight:normal;transform:scaleX(0.9721);transform-origin:0 0;">Uplo</div>
<div class="a" style="left:627.5px;top:467.42px;font-size:12.5px;line-height:12.5px;color:#000;font-weight:normal;transform:scaleX(1.0045);transform-origin:0 0;">:</div>
<div class="a" style="left:635.6px;top:467.42px;font-size:12.5px;line-height:12.5px;color:#000;font-weight:normal;transform:scaleX(0.9294);transform-origin:0 0;">上三角/下三角指定</div>
<div class="a" style="left:740.6px;top:467.42px;font-size:12.5px;line-height:12.5px;color:#000;font-weight:normal;transform:scaleX(0.8669);transform-origin:0 0;">(U または L)</div>
<div class="a" style="left:419px;top:523px;width:489px;height:1px;background:#dcdcdc"></div>
<div class="a" style="left:419px;top:539.92px;font-size:12.5px;line-height:12.5px;color:#000;font-weight:normal;transform:scaleX(0.8846);transform-origin:0 0;">数式の結果</div>
<div class="a" style="left:481.5px;top:539.92px;font-size:12.5px;line-height:12.5px;color:#000;font-weight:normal;transform:scaleX(1.0667);transform-origin:0 0;">=</div>
<div class="a" style="left:500px;top:539.92px;font-size:12.5px;line-height:12.5px;color:#000;font-weight:normal;transform:scaleX(1.0270);transform-origin:0 0;">0.07</div>
<div class="a" style="left:419px;top:573.42px;font-size:12.5px;line-height:12.5px;color:#0066cc;font-weight:normal;transform:scaleX(0.8240);transform-origin:0 0;">この関数のヘルプ(H)</div>
<div class="a" style="left:419px;top:584px;width:100px;height:1px;background:#0066cc"></div>
<div class="a" style="left:750px;top:566px;width:74px;height:25px;background:#e1e1e1;border:2px solid #0078d7"></div>
<div class="a" style="left:834px;top:566px;width:74px;height:25px;background:#e1e1e1;border:1px solid #adadad"></div>
<div class="a" style="left:778px;top:573.42px;font-size:12.5px;line-height:12.5px;color:#000;font-weight:normal;transform:scaleX(0.9412);transform-origin:0 0;">OK</div>
<div class="a" style="left:847px;top:572.92px;font-size:12.5px;line-height:12.5px;color:#000;font-weight:normal;transform:scaleX(0.7231);transform-origin:0 0;">キャンセル</div>
</body></html>
